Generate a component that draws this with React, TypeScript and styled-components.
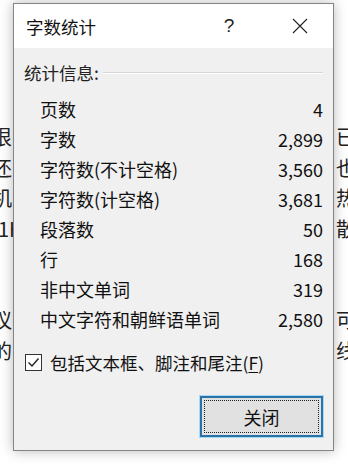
import styled, { createGlobalStyle } from 'styled-components';

const GlobalStyle = createGlobalStyle`
  html, body {
    margin: 0;
    padding: 0;
    background: #ffffff;
  }
  body {
    font-family: "Noto Sans CJK SC", "Noto Sans", sans-serif;
  }
`;

const Page = styled.div`
  position: relative;
  width: 348px;
  height: 464px;
  overflow: hidden;
  background: #ffffff;
`;

const Document = styled.div`
  display: flex;
  flex-direction: column;
  padding-top: 122px;
  font-size: 20px;
  color: #222;
`;

const DocLine = styled.div`
  display: flex;
  justify-content: space-between;
  height: 30.5px;
  line-height: 30px;
  white-space: nowrap;
`;

const DocEdge = styled.span<{ $shift: number }>`
  margin-left: ${(p) => p.$shift}px;
  margin-right: ${(p) => p.$shift}px;
`;

const Dialog = styled.div`
  position: absolute;
  left: 13px;
  top: 3px;
  width: 321px;
  box-sizing: border-box;
  border: 1px solid #858585;
  background: #f0f0f0;
  box-shadow: 0 0 12px rgba(0, 0, 0, 0.28);
  display: flex;
  flex-direction: column;
  color: #111;
`;

const TitleBar = styled.div`
  height: 44px;
  background: #ffffff;
  display: flex;
  align-items: center;
  padding-left: 12px;
`;

const Title = styled.div`
  flex: 1;
  font-size: 17.5px;
  color: #111;
`;

const TitleButton = styled.div`
  width: 46px;
  height: 44px;
  display: flex;
  align-items: center;
  justify-content: center;
  font-size: 18px;
  color: #222;
`;

const HelpButton = styled(TitleButton)`
  margin-right: 25px;
  font-family: "Liberation Sans", sans-serif;
  font-size: 19px;
`;

const CloseButton = styled(TitleButton)`
  margin-right: 10px;
`;

const Body = styled.div`
  display: flex;
  flex-direction: column;
  padding: 12px 10px 13px 10px;
`;

const SectionHeader = styled.div`
  display: flex;
  align-items: center;
  height: 24px;
  font-size: 17.5px;
  color: #222;
  gap: 4px;
`;

const SectionRule = styled.div`
  flex: 1;
  height: 0;
  border-top: 1px solid #d6d6d6;
  border-bottom: 1px solid #ffffff;
  margin-top: 2px;
`;

const StatList = styled.div`
  display: flex;
  flex-direction: column;
  margin-top: 10px;
  padding-left: 16px;
`;

const StatRow = styled.div`
  display: flex;
  justify-content: space-between;
  align-items: center;
  height: 30px;
  font-size: 18px;
  color: #111;
`;

const CheckRow = styled.div`
  display: flex;
  align-items: center;
  height: 24px;
  margin-top: 16px;
  padding-left: 1px;
  gap: 8px;
  font-size: 17.5px;
  color: #111;
`;

const CheckBox = styled.div`
  width: 17px;
  height: 17px;
  box-sizing: border-box;
  border: 1px solid #333;
  background: #ffffff;
  display: flex;
  align-items: center;
  justify-content: center;
`;

const Mnemonic = styled.span`
  text-decoration: underline;
  text-underline-offset: 2px;
`;

const Footer = styled.div`
  display: flex;
  justify-content: flex-end;
  margin-top: 22px;
`;

const PrimaryButton = styled.div`
  width: 123px;
  height: 41px;
  box-sizing: border-box;
  border: 2px solid #2a73a8;
  box-shadow: 0 0 0 1px #a8d8f5;
  background: #e1e1e1;
  padding: 2px;
  display: flex;
`;

const FocusRing = styled.div`
  flex: 1;
  border: 1px dotted #222;
  display: flex;
  align-items: center;
  justify-content: center;
  font-size: 18px;
  color: #111;
`;

const stats: [string, string][] = [
  ['页数', '4'],
  ['字数', '2,899'],
  ['字符数(不计空格)', '3,560'],
  ['字符数(计空格)', '3,681'],
  ['段落数', '50'],
  ['行', '168'],
  ['非中文单词', '319'],
  ['中文字符和朝鲜语单词', '2,580'],
];

const docLines: [string, string, number][] = [
  ['很', '已', -8],
  ['还', '也', -8],
  ['机', '热', -8],
  ['1H', '散', -2],
  ['', '', 0],
  ['', '', 0],
  ['议', '可', -8],
  ['的', '线', -8],
];

export default function App() {
  return (
    <Page>
      <GlobalStyle />
      <Document>
        {docLines.map(([l, r, shift], i) => (
          <DocLine key={i}>
            <DocEdge $shift={shift}>{l}</DocEdge>
            <DocEdge $shift={-8}>{r}</DocEdge>
          </DocLine>
        ))}
      </Document>
      <Dialog>
        <TitleBar>
          <Title>字数统计</Title>
          <HelpButton>?</HelpButton>
          <CloseButton>
            <svg width="16" height="16" viewBox="0 0 16 16">
              <path d="M1 1 L15 15 M15 1 L1 15" stroke="#222" strokeWidth="1.1" fill="none" />
            </svg>
          </CloseButton>
        </TitleBar>
        <Body>
          <SectionHeader>
            <span>统计信息:</span>
            <SectionRule />
          </SectionHeader>
          <StatList>
            {stats.map(([label, value]) => (
              <StatRow key={label}>
                <span>{label}</span>
                <span>{value}</span>
              </StatRow>
            ))}
          </StatList>
          <CheckRow>
            <CheckBox>
              <svg width="13" height="11" viewBox="0 0 13 11">
                <path d="M1.5 5.5 L5 9 L11.5 1.5" stroke="#222" strokeWidth="1.4" fill="none" />
              </svg>
            </CheckBox>
            <span>
              包括文本框、脚注和尾注(<Mnemonic>F</Mnemonic>)
            </span>
          </CheckRow>
          <Footer>
            <PrimaryButton>
              <FocusRing>关闭</FocusRing>
            </PrimaryButton>
          </Footer>
        </Body>
      </Dialog>
    </Page>
  );
}
